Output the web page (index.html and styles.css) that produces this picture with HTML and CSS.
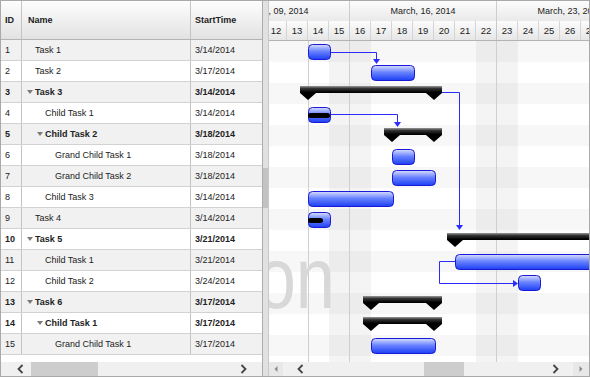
FILE: index.html
```html
<!DOCTYPE html>
<html lang="en">
<head>
    <meta charset="UTF-8">
    <title>Gantt</title>
    <link rel="stylesheet" href="styles.css">
</head>
<body>
<div class="gantt">
    <div class="grid">
        <div class="grid-head">
            <div class="cell c-id">ID</div>
            <div class="cell c-name head-name">Name</div>
            <div class="cell c-start">StartTime</div>
        </div>
        <div class="grid-body">
            <div class="row"><div class="cell c-id">1</div><div class="cell c-name lv0"><span class="tw"></span>Task 1</div><div class="cell c-start">3/14/2014</div></div>
            <div class="row"><div class="cell c-id">2</div><div class="cell c-name lv0"><span class="tw"></span>Task 2</div><div class="cell c-start">3/17/2014</div></div>
            <div class="row sum"><div class="cell c-id">3</div><div class="cell c-name lv0"><span class="tw"><i class="tri"></i></span>Task 3</div><div class="cell c-start">3/14/2014</div></div>
            <div class="row"><div class="cell c-id">4</div><div class="cell c-name lv1"><span class="tw"></span>Child Task 1</div><div class="cell c-start">3/14/2014</div></div>
            <div class="row sum"><div class="cell c-id">5</div><div class="cell c-name lv1"><span class="tw"><i class="tri"></i></span>Child Task 2</div><div class="cell c-start">3/18/2014</div></div>
            <div class="row"><div class="cell c-id">6</div><div class="cell c-name lv2"><span class="tw"></span>Grand Child Task 1</div><div class="cell c-start">3/18/2014</div></div>
            <div class="row"><div class="cell c-id">7</div><div class="cell c-name lv2"><span class="tw"></span>Grand Child Task 2</div><div class="cell c-start">3/18/2014</div></div>
            <div class="row"><div class="cell c-id">8</div><div class="cell c-name lv1"><span class="tw"></span>Child Task 3</div><div class="cell c-start">3/14/2014</div></div>
            <div class="row"><div class="cell c-id">9</div><div class="cell c-name lv0"><span class="tw"></span>Task 4</div><div class="cell c-start">3/14/2014</div></div>
            <div class="row sum"><div class="cell c-id">10</div><div class="cell c-name lv0"><span class="tw"><i class="tri"></i></span>Task 5</div><div class="cell c-start">3/21/2014</div></div>
            <div class="row"><div class="cell c-id">11</div><div class="cell c-name lv1"><span class="tw"></span>Child Task 1</div><div class="cell c-start">3/21/2014</div></div>
            <div class="row"><div class="cell c-id">12</div><div class="cell c-name lv1"><span class="tw"></span>Child Task 2</div><div class="cell c-start">3/24/2014</div></div>
            <div class="row sum"><div class="cell c-id">13</div><div class="cell c-name lv0"><span class="tw"><i class="tri"></i></span>Task 6</div><div class="cell c-start">3/17/2014</div></div>
            <div class="row sum"><div class="cell c-id">14</div><div class="cell c-name lv1"><span class="tw"><i class="tri"></i></span>Child Task 1</div><div class="cell c-start">3/17/2014</div></div>
            <div class="row"><div class="cell c-id">15</div><div class="cell c-name lv2"><span class="tw"></span>Grand Child Task 1</div><div class="cell c-start">3/17/2014</div></div>
        </div>
        <div class="hscroll grid-scroll">
            <svg class="chev" width="7" height="10"><polyline points="5.5,1 1.5,5 5.5,9"/></svg>
            <div class="thumb grid-thumb"></div>
            <svg class="chev chev-right" width="7" height="10"><polyline points="1.5,1 5.5,5 1.5,9"/></svg>
        </div>
    </div>

    <div class="splitter"><div class="vthumb"></div></div>

    <div class="chart">
        <div class="tl-head">
            <div class="weeks">
                <div class="week">March, 09, 2014</div>
                <div class="week">March, 16, 2014</div>
                <div class="week">March, 23, 2014</div>
            </div>
            <div class="days">
                <div class="day">9</div><div class="day">10</div><div class="day">11</div><div class="day">12</div><div class="day">13</div><div class="day">14</div><div class="day">15</div>
                <div class="day">16</div><div class="day">17</div><div class="day">18</div><div class="day">19</div><div class="day">20</div><div class="day">21</div><div class="day">22</div>
                <div class="day">23</div><div class="day">24</div><div class="day">25</div><div class="day">26</div><div class="day">27</div><div class="day">28</div><div class="day">29</div>
            </div>
        </div>
        <div class="chart-body">
            <svg width="320" height="322">
                <defs>
                    <linearGradient id="blue" x1="0" y1="0" x2="0" y2="1">
                        <stop offset="0" stop-color="#d9deff"/>
                        <stop offset="0.45" stop-color="#6a84ff"/>
                        <stop offset="1" stop-color="#1c3ef4"/>
                    </linearGradient>
                    <linearGradient id="black" x1="0" y1="0" x2="0" y2="1">
                        <stop offset="0" stop-color="#9a9a9a"/>
                        <stop offset="0.18" stop-color="#333"/>
                        <stop offset="0.45" stop-color="#000"/>
                        <stop offset="1" stop-color="#000"/>
                    </linearGradient>
                </defs>

                <!-- row stripes -->
                <g class="stripe">
                    <rect x="0" y="0" width="320" height="21"/>
                    <rect x="0" y="42" width="320" height="21"/>
                    <rect x="0" y="84" width="320" height="21"/>
                    <rect x="0" y="126" width="320" height="21"/>
                    <rect x="0" y="168" width="320" height="21"/>
                    <rect x="0" y="210" width="320" height="21"/>
                    <rect x="0" y="252" width="320" height="21"/>
                    <rect x="0" y="294" width="320" height="21"/>
                </g>
                <!-- weekends -->
                <g class="weekend">
                    <rect x="60" y="0" width="42" height="322"/>
                    <rect x="207" y="0" width="42" height="322"/>
                </g>
                <g class="vline">
                    <line x1="39.5" y1="0" x2="39.5" y2="322"/>
                    <line x1="80.5" y1="0" x2="80.5" y2="322"/>
                    <line x1="227.5" y1="0" x2="227.5" y2="322"/>
                </g>

                <text class="wm" transform="translate(66 267) scale(0.8 1)" text-anchor="end">on</text>

                <!-- summaries -->
                <g class="summary">
                    <path d="M31 45 H173 V52 L165 59 L157 52 H47 L39 59 L31 52 Z"/>
                    <path d="M115 87 H173 V94 L165 101 L157 94 H131 L123 101 L115 94 Z"/>
                    <path d="M178 192 H420 V199 H194 L186 206 L178 199 Z"/>
                    <path d="M94 255 H173 V262 L165 269 L157 262 H110 L102 269 L94 262 Z"/>
                    <path d="M94 276 H173 V283 L165 290 L157 283 H110 L102 290 L94 283 Z"/>
                </g>

                <!-- tasks -->
                <g class="task">
                    <rect x="39.5" y="3.5" width="22" height="15" rx="4"/>
                    <rect x="102.5" y="24.5" width="43" height="15" rx="4"/>
                    <rect x="39.5" y="66.5" width="22" height="15" rx="4"/>
                    <rect x="123.5" y="108.5" width="22" height="15" rx="4"/>
                    <rect x="123.5" y="129.5" width="43" height="15" rx="4"/>
                    <rect x="39.5" y="150.5" width="85" height="15" rx="4"/>
                    <rect x="39.5" y="171.5" width="22" height="15" rx="4"/>
                    <rect x="186.5" y="213.5" width="300" height="15" rx="4"/>
                    <rect x="249.5" y="234.5" width="22" height="15" rx="4"/>
                    <rect x="102.5" y="297.5" width="64" height="15" rx="4"/>
                </g>
                <g class="progress">
                    <rect x="39" y="72" width="22" height="5" rx="2.5"/>
                    <rect x="39" y="177" width="15" height="5" rx="2.5"/>
                </g>

                <!-- dependencies -->
                <g class="link">
                    <polyline points="62,11.5 107.5,11.5 107.5,19"/>
                    <polyline points="173,51.5 190.5,51.5 190.5,185"/>
                    <polyline points="62,73.5 128.5,73.5 128.5,82"/>
                    <polyline points="186,220.5 170.5,220.5 170.5,242.5 244,242.5"/>
                </g>
                <g class="arrow">
                    <polygon points="104,18 111,18 107.5,23"/>
                    <polygon points="187,184 194,184 190.5,189"/>
                    <polygon points="125,81 132,81 128.5,86"/>
                    <polygon points="244,239 244,246 249,242.5"/>
                </g>
            </svg>
        </div>
        <div class="hscroll chart-scroll">
            <div class="sbtn"><svg width="4" height="6"><polygon points="3.5,0 3.5,6 0.5,3"/></svg></div>
            <svg class="chev chev-left" width="7" height="10"><polyline points="5.5,1 1.5,5 5.5,9"/></svg>
            <div class="thumb chart-thumb"></div>
            <svg class="chev chev-right" width="7" height="10"><polyline points="1.5,1 5.5,5 1.5,9"/></svg>
            <div class="sbtn sbtn-right"><svg width="4" height="6"><polygon points="0.5,0 0.5,6 3.5,3"/></svg></div>
        </div>
    </div>
</div>
</body>
</html>
```

FILE: styles.css
```css
body {
    margin: 0;
    font-family: "Liberation Sans", Arial, sans-serif;
    font-size: 9px;
    color: #222;
    background: #fff;
}

.gantt {
    display: flex;
    width: 590px;
    height: 377px;
    border: 1px solid #a9a9a9;
    box-sizing: border-box;
    overflow: hidden;
}

/* left grid */
.grid {
    width: 261px;
    display: flex;
    flex-direction: column;
    flex: none;
}

.grid-head {
    display: flex;
    height: 38px;
    border-bottom: 1px solid #b3b3b3;
    background: linear-gradient(#fdfdfd, #e2e2e2);
    font-weight: bold;
}

.cell {
    display: flex;
    align-items: center;
    box-sizing: border-box;
    border-right: 1px solid #c4c4c4;
    white-space: nowrap;
}

.c-id {
    width: 21px;
    padding-left: 4px;
}

.c-name {
    width: 169px;
}

.head-name {
    padding-left: 6px;
}

.c-start {
    width: 71px;
    padding-left: 4px;
    border-right: none;
}

.lv0 { padding-left: 5px; }
.lv1 { padding-left: 15px; }
.lv2 { padding-left: 25px; }

.tw {
    display: inline-flex;
    align-items: center;
    width: 8px;
    flex: none;
}

.tri {
    width: 0;
    height: 0;
    border-left: 3px solid transparent;
    border-right: 3px solid transparent;
    border-top: 4px solid #7a7a7a;
}

.grid-body {
    flex: 1;
}

.row {
    display: flex;
    height: 21px;
    border-bottom: 1px solid #d2d2d2;
    box-sizing: border-box;
}

.row:nth-child(odd) {
    background: #f1f1f1;
}

.row.sum {
    font-weight: bold;
}

/* scrollbars */
.hscroll {
    height: 14px;
    display: flex;
    align-items: center;
    background: #f0f0f0;
    flex: none;
}

.chev polyline {
    fill: none;
    stroke: #454545;
    stroke-width: 1.8;
}

.grid-scroll {
    padding-left: 16px;
    padding-right: 15px;
}

.thumb {
    height: 14px;
    background: #cdcdcd;
}

.grid-thumb {
    width: 67px;
    margin-left: 7px;
}

.chev-right {
    margin-left: auto;
}

.chart-scroll .chev-left {
    margin-left: 14px;
}

.chart-thumb {
    width: 40px;
    margin-left: 120px;
}

.sbtn {
    width: 14px;
    height: 14px;
    background: #e8e8e8;
    display: flex;
    align-items: center;
    justify-content: center;
}

.sbtn-right {
    width: 16px;
    margin-left: 14px;
}

.sbtn polygon {
    fill: #8a8a8a;
}

/* splitter */
.splitter {
    width: 7px;
    flex: none;
    box-sizing: border-box;
    border-left: 1px solid #adadad;
    border-right: 1px solid #c9c9c9;
    background: #e1e1e1;
    padding-top: 167px;
}

.vthumb {
    height: 40px;
    background: #c3c3c3;
}

/* timeline */
.chart {
    flex: 1;
    display: flex;
    flex-direction: column;
    overflow: hidden;
    min-width: 0;
}

.tl-head {
    height: 39px;
    border-bottom: 1px solid #b3b3b3;
    flex: none;
}

.weeks,
.days {
    display: flex;
    margin-left: -66px;
}

.week {
    flex: none;
    width: 147px;
    height: 20px;
    line-height: 20px;
    text-align: center;
    box-sizing: border-box;
    border-right: 1px solid #cdcdcd;
    background: linear-gradient(#fcfcfc, #e9e9e9);
    white-space: nowrap;
}

.day {
    flex: none;
    width: 21px;
    height: 19px;
    line-height: 19px;
    text-align: center;
    box-sizing: border-box;
    border-right: 1px solid #d4d4d4;
    background: linear-gradient(#fcfcfc, #e6e6e6);
    font-size: 9.5px;
}

.day:nth-child(7n) {
    border-right-color: #c8c8c8;
}

.chart-body {
    flex: 1;
    overflow: hidden;
}

.chart-body svg {
    display: block;
}

.stripe rect {
    fill: #f7f7f7;
}

.weekend rect {
    fill: rgba(0, 0, 0, 0.045);
}

.vline line {
    stroke: #cfcfcf;
    stroke-width: 1;
}

.wm {
    font-family: "Liberation Sans", Arial, sans-serif;
    font-size: 88px;
    fill: #d8d8d8;
}

.summary path {
    fill: url(#black);
}

.task rect {
    fill: url(#blue);
    stroke: #1a1ad6;
    stroke-width: 1;
}

.progress rect {
    fill: #000;
}

.link polyline {
    fill: none;
    stroke: #2b2bff;
    stroke-width: 1;
}

.arrow polygon {
    fill: #2b2bff;
}
```
